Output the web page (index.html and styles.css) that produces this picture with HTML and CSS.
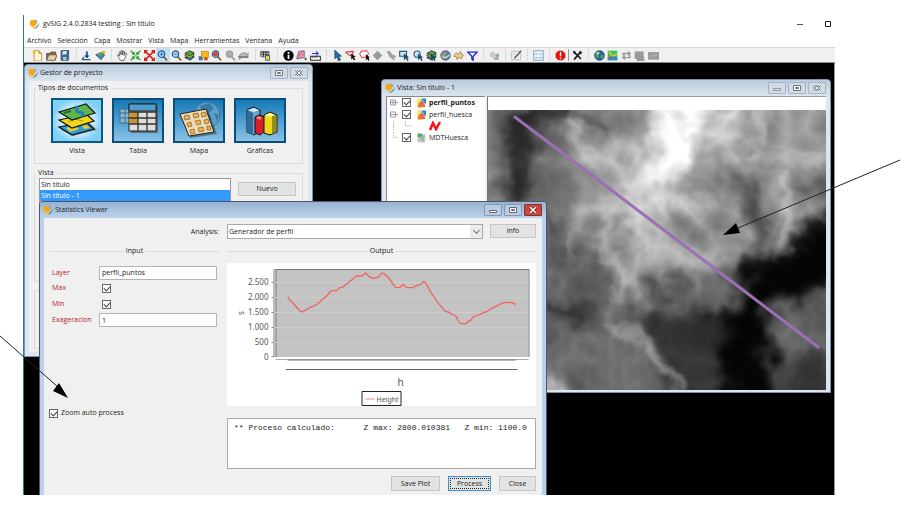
FILE: index.html
```html
<!DOCTYPE html>
<html lang="es">
<head>
<meta charset="utf-8">
<title>gvSIG 2.4.0.2834 testing : Sin título</title>
<link rel="stylesheet" href="styles.css">
</head>
<body>
<svg class="defs" width="0" height="0" aria-hidden="true">
  <symbol id="logo" viewBox="0 0 16 16">
    <circle cx="6" cy="6.500" r="5.500" fill="#f6a81c"/>
    <path d="M9 0.500c3 .5 4 3 3.500 6l-2-1c.5-2 0-3.500-1.500-5z" fill="#4aa7dc"/>
    <path d="M15.500 5c.5 5-2 9-8 10.500 1-1 2-2.500 3-3 3-1.500 4.500-4 5-7.500z" fill="#2479b5"/>
    <path d="M3 10c2 3 5 4 8 2l-3 3.500C5 15 3 13 3 10z" fill="#f8c440"/>
  </symbol>
  <symbol id="mag" viewBox="0 0 16 16">
    <path d="M9.500 9.500l5 5.500" stroke="#8a5a20" stroke-width="2.500"/>
    <circle cx="6.500" cy="6" r="4.600" fill="#b9dcf4" stroke="#215c92" stroke-width="1.800"/>
  </symbol>
  <symbol id="cursor" viewBox="0 0 16 16">
    <path d="M4 0v13l3-3 2.500 6 3-1.500L10 9h4z" fill="#236c9e" stroke="#123c60" stroke-width=".8"/>
  </symbol>
  <symbol id="globe" viewBox="0 0 16 16">
    <circle cx="8" cy="8" r="7" fill="#2465a5" stroke="#10314c"/>
    <path d="M3 4c3-3 6-2 6 0L6 7l1 4-3 1-2-4zM10 7l4 1-2 5-3-2z" fill="#5aa54c"/>
    <circle cx="5.500" cy="5" r="2" fill="#d9f0fa" opacity=".7"/>
  </symbol>
  <symbol id="layers" viewBox="0 0 16 16">
    <path d="M1 11l7-3 7 2-6 5z" fill="#2b8fc8" stroke="#111"/>
    <path d="M1 8l7-3 7 2-6 5z" fill="#f5d327" stroke="#111"/>
    <path d="M1 5l7-4 7 3-6 5z" fill="#4da34b" stroke="#111"/>
  </symbol>
  <symbol id="lyr" viewBox="0 0 16 16">
    <path d="M0 0h10v16H0z" fill="#fbe36a"/><path d="M8 0h8v9H8z" fill="#2b83d4"/>
    <path d="M2 16c0-7 3-11 6-11s6 5 7 10z" fill="#ee6b3b"/><path d="M8 1l5 7" stroke="#fff"/>
  </symbol>
</svg>

<main class="app">
  <header class="titlebar">
    <svg class="logo"><use href="#logo"/></svg>
    <h1>gvSIG 2.4.0.2834 testing : Sin título</h1>
    <button class="sys" aria-label="Minimizar"><svg viewBox="0 0 8 8"><path d="M1 4.500h6" stroke="#555"/></svg></button>
    <button class="sys" aria-label="Maximizar"><svg viewBox="0 0 8 8"><path d="M1.500 1.500h5v5h-5z" fill="none" stroke="#222"/></svg></button>
  </header>
  <nav class="menu">
    <a href="#">Archivo</a><a href="#">Selección</a><a href="#">Capa</a><a href="#">Mostrar</a><a href="#">Vista</a><a href="#">Mapa</a><a href="#">Herramientas</a><a href="#">Ventana</a><a href="#">Ayuda</a>
  </nav>
  <div class="toolbar"><div class="strip">
    <button aria-label="Nuevo"><svg viewBox="0 0 16 16"><path d="M3 1h7l4 4v11H3z" fill="#fff6cf" stroke="#a0762a"/><path d="M10 1v4h4" fill="#e9c46a" stroke="#a0762a"/><path d="M1 3h4M3 1v4" stroke="#f4a900" stroke-width="2"/></svg></button>
    <button aria-label="Abrir"><svg viewBox="0 0 16 16"><path d="M1 5h5l1-2h7v11H1z" fill="#8a6f46" stroke="#4a3b25"/><path d="M4 7h12l-3 8H1z" fill="#e6d3ab" stroke="#4a3b25"/></svg></button>
    <button aria-label="Guardar"><svg viewBox="0 0 16 16"><path d="M3 1l11-1v14l-2 2-9-1z" fill="#3c6a8e" stroke="#29475e"/><path d="M5 2l6-1v5l-6 1z" fill="#dbe6ee"/><path d="M6 10h5v5H6z" fill="#b7c5cf"/></svg></button>
    <i class="sep"></i>
    <button aria-label="Añadir vista"><svg viewBox="0 0 16 16"><path d="M7 2h3v8H7z" fill="#2563b0"/><path d="M5 8h7l-3 4z" fill="#172c84"/><path d="M1 14l4-4M2 14h12" stroke="#16708a" stroke-width="2"/></svg></button>
    <button aria-label="Añadir capa"><svg viewBox="0 0 16 16"><path d="M1 7l7-3 6 3-5 7z" fill="#3a89b5" stroke="#214657"/><path d="M2 6l6-3 4 2-5 4z" fill="#58a65c"/><path d="M10 3h5M12.500 1v5" stroke="#e7a300" stroke-width="2"/></svg></button>
    <i class="sep"></i>
    <button aria-label="Desplazar"><svg viewBox="0 0 16 16"><path d="M5 15C3 12 1 9 1 7l2 1 1 1-1-6 2 0 1 4V1h2v6l1-5h2l-1 6 2-4 2 1c-1 4-2 7-4 10z" fill="#fff" stroke="#333"/></svg></button>
    <button aria-label="Zoom todo"><svg viewBox="0 0 16 16"><path d="M1 1l5 5M15 1l-5 5M1 15l5-5M15 15l-5-5M3 6h3V3M10 3v3h3M3 10h3v3M10 13v-3h3" fill="none" stroke="#2d9b30" stroke-width="1.800"/><path d="M6 6h4v4H6z" fill="#8fd18e"/></svg></button>
    <button aria-label="Zoom previo"><svg viewBox="0 0 16 16"><path d="M2 2l12 12M14 2L2 14M1 5V1h4M11 1h4v4M1 11v4h4M11 15h4v-4" fill="none" stroke="#d8231d" stroke-width="2.200"/></svg></button>
    <button class="on" aria-label="Acercar"><svg viewBox="0 0 16 16"><use href="#mag"/><path d="M4 6h5M6.500 3.500v5" stroke="#153e6b"/></svg></button>
    <button aria-label="Alejar"><svg viewBox="0 0 16 16"><use href="#mag"/><path d="M4 6h5" stroke="#153e6b"/></svg></button>
    <button aria-label="Capas"><svg><use href="#layers"/></svg></button>
    <button aria-label="Zoom a capa"><svg viewBox="0 0 16 16"><path d="M1 9h6v6H1z" fill="#2f78bd"/><path d="M5 2h10v9H5z" fill="#f6b91e" stroke="#bd7b07"/><path d="M9 11h5v4H9z" fill="#c8442b"/></svg></button>
    <button aria-label="Zoom selección"><svg viewBox="0 0 16 16"><use href="#mag"/><circle cx="6.500" cy="6" r="3.400" fill="#de3b35"/></svg></button>
    <button aria-label="Zoom anterior"><svg viewBox="0 0 16 16"><path d="M9.500 9.500l5 5.500" stroke="#999" stroke-width="2.500"/><circle cx="6.500" cy="6" r="5" fill="#aaa" stroke="#909090"/></svg></button>
    <button aria-label="Localizar"><svg viewBox="0 0 16 16"><path d="M2 9c0-4 8-7 11-3l2-1-1 6H5l-3 3 1-4z" fill="#bbb" stroke="#777"/><path d="M0 10h15" stroke="#777" stroke-width="2"/></svg></button>
    <i class="sep"></i>
    <button aria-label="Tabla"><svg viewBox="0 0 16 16"><path d="M1 2h12v8H1z" fill="#fff" stroke="#333"/><path d="M1 4h12M1 7h12M5 2v8M9 2v8" stroke="#333" stroke-width="1.500"/><path d="M8 8h6v7H8z" fill="#e2d45a" stroke="#333"/></svg></button>
    <i class="sep"></i>
    <button aria-label="Información"><svg viewBox="0 0 16 16"><circle cx="8" cy="8" r="7.500" fill="#050505"/><path d="M8 3v2.500M8 7v6" stroke="#fff" stroke-width="2.500"/></svg></button>
    <button aria-label="Área"><svg viewBox="0 0 16 16"><path d="M4 2l8-1v10l-11 2z" fill="#f2b2bd" stroke="#3544b4"/><path d="M2 12L11 2M6 12l6-7M3 8l5-6" stroke="#d4202a"/><path d="M12 13h4M14 11v4" stroke="#222"/></svg></button>
    <button aria-label="Distancia"><svg viewBox="0 0 16 16"><path d="M1 9h14v6H1z" fill="#fff" stroke="#222" stroke-width="1.500"/><path d="M4 9v3M7 9v3M10 9v3" stroke="#222"/><path d="M3 5h9M9 2l3 3-3 3" stroke="#2636d8" fill="none" stroke-width="1.500"/></svg></button>
    <i class="sep"></i>
    <button aria-label="Seleccionar"><svg><use href="#cursor"/></svg></button>
    <button aria-label="Por polígono"><svg viewBox="0 0 16 16"><path d="M1 3l11-1-1 5-4 1M1 3l7 6" fill="none" stroke="#d82c34" stroke-width="1.600"/><path d="M9 5v9l2-2 2 3 2-1-2-4h3z" fill="#111"/></svg></button>
    <button aria-label="Por círculo"><svg viewBox="0 0 16 16"><path d="M3 2l8-1 3 4-3 5-7 1-3-5z" fill="#fff" stroke="#d82c34" stroke-width="1.400"/><path d="M10 6v9l2-2 2 3 1-1-1-4h2z" fill="#111"/></svg></button>
    <button aria-label="Por capa"><svg viewBox="0 0 16 16"><path d="M8 1l3 3 4 4-4 4-3 3-3-3-4-4 4-4z" fill="#999"/></svg></button>
    <button aria-label="Invertir"><svg viewBox="0 0 16 16"><path d="M1 2l4-1 4 5 6 3-3 3 1 4-8-6z" fill="#a2a2a2"/></svg></button>
    <button aria-label="Por rectángulo"><svg viewBox="0 0 16 16"><path d="M1 2h10v7H1z" fill="#cce2ef" stroke="#1d5c85" stroke-width="1.600"/><path d="M7 5v10l3-3 2 4 2-1-2-4h3z" fill="#184a69"/></svg></button>
    <button aria-label="Por radio"><svg viewBox="0 0 16 16"><circle cx="6" cy="6" r="4.500" fill="#d6e6ef" stroke="#1d5c85" stroke-width="1.600"/><path d="M7 5v10l3-3 2 4 2-1-2-4h3z" fill="#184a69"/></svg></button>
    <button aria-label="Por atributos"><svg viewBox="0 0 16 16"><use href="#layers"/><path d="M7 5v10l3-3 2 4 2-1-2-4h3z" fill="#184a69"/></svg></button>
    <button aria-label="Mundo"><svg viewBox="0 0 16 16"><circle cx="8" cy="8" r="7" fill="#4a80ad" stroke="#555"/><path d="M3 5c3-3 6-2 7 0L7 8l2 4-4 1-3-4z" fill="#9c9a68"/><path d="M3 10q6 3 11-3" stroke="#ccc" stroke-width="2" fill="none"/></svg></button>
    <button aria-label="Recargar"><svg viewBox="0 0 16 16"><path d="M1 9l4-5 2 3 4-5 1 4 3 1-3 6-3-3-3 4-1-4z" fill="#ecd08a" stroke="#8c6a2b"/></svg></button>
    <button aria-label="Filtro"><svg viewBox="0 0 16 16"><path d="M1 3h14L9 9v6l-2-2V9z" fill="#eef" stroke="#1b29d0" stroke-width="1.800"/></svg></button>
    <i class="sep"></i>
    <button aria-label="Enlace"><svg viewBox="0 0 16 16"><circle cx="5" cy="7" r="4" fill="#c9c9c9"/><circle cx="12" cy="8" r="3" fill="#8fb39a"/><path d="M7 11h7v3H7z" fill="#999"/></svg></button>
    <i class="sep"></i>
    <button aria-label="Editar"><svg viewBox="0 0 16 16"><path d="M1 2h13v12H1z" fill="#f6f6f2" stroke="#9fa9ad"/><path d="M1 6h13M5 2v12M10 2v12" stroke="#c8d2d6"/><path d="M5 12L15 1" stroke="#5b4a30" stroke-width="1.800"/></svg></button>
    <i class="sep"></i>
    <button aria-label="Cuadrícula"><svg viewBox="0 0 16 16"><path d="M1 1h14v14H1z" fill="#eaf3fb" stroke="#86a8c8" stroke-width="1.500"/><path d="M3 5h4v2H3zM9 5h4v2H9zM3 10h4v2H3zM9 10h4v2H9z" fill="#9fbcd8"/></svg></button>
    <i class="sep"></i>
    <button aria-label="Avisos"><svg viewBox="0 0 16 16"><path d="M5 1h6l4 4v6l-4 4H5l-4-4V5z" fill="#e8120c"/><path d="M8 3v6M8 11v2" stroke="#fff" stroke-width="2"/></svg></button>
    <i class="bar"></i>
    <button aria-label="Herramientas"><svg viewBox="0 0 16 16"><path d="M3 3l10 10M13 2L3 14" stroke="#222" stroke-width="2.400"/><path d="M1 2l3-1 2 3-3 2zM11 1l4 3-3 3z" fill="#222"/></svg></button>
    <i class="sep"></i>
    <button aria-label="Geoproceso"><svg><use href="#globe"/></svg></button>
    <button aria-label="Mapa"><svg viewBox="0 0 16 16"><path d="M1 1h14v14H1z" fill="#3fc05a"/><path d="M1 11l8-2 6 2v4H1z" fill="#2c8fd4"/><path d="M3 3l5 6 6-3" stroke="#f2d22e" stroke-width="2" fill="none"/><path d="M3 12l5-3" stroke="#e5482a" stroke-width="2"/></svg></button>
    <button aria-label="Intercambiar"><svg viewBox="0 0 16 16"><path d="M2 8V4h8V1l5 4-5 4V6H5v2zM14 8v4H6v3l-5-4 5-4v3h5V8z" fill="#999"/></svg></button>
    <button aria-label="Copiar"><svg viewBox="0 0 16 16"><path d="M1 2h13v11H1zM4 10h11v6H4z" fill="#9a9a9a"/></svg></button>
    <button aria-label="Imagen"><svg viewBox="0 0 16 16"><path d="M0 3h16v11H0z" fill="#9a9a9a"/><path d="M3 11l4-4 3 2 4-2" stroke="#ccc" fill="none"/></svg></button>
  </div></div>

  <div class="desktop">
    <section class="win project">
      <div class="wbar"><svg class="logo"><use href="#logo"/></svg><h2>Gestor de proyecto</h2>
        <button class="wb" aria-label="Maximizar"><svg viewBox="0 0 8 6"><path d="M.5 .5h7v5h-7zM2.500 2.500h3v1h-3z" fill="#f6f6f6" stroke="#777"/></svg></button>
        <button class="wb" aria-label="Cerrar"><svg viewBox="0 0 8 6"><path d="M1 0l6 6M7 0L1 6" stroke="#777" stroke-width="2.500"/><path d="M1 0l6 6M7 0L1 6" stroke="#fff"/></svg></button>
      </div>
      <div class="wbody pbody">
        <fieldset class="types"><legend>Tipos de documentos</legend>
          <div class="docset">
          <button class="doc"><svg viewBox="0 0 52 45"><defs><radialGradient id="glow"><stop offset=".4" stop-color="#fff"/><stop offset="1" stop-color="#7fd0f5"/></radialGradient><linearGradient id="blue" x2="0" y2="1"><stop offset="0" stop-color="#1377b6"/><stop offset="1" stop-color="#8cc4e8"/></linearGradient></defs>
            <path d="M1 1h50v43H1z" fill="url(#glow)" stroke="#0b5684" stroke-width="2"/>
            <path d="M10 32l29-7 7 7-24 6z" fill="#555" opacity=".6"/>
            <path d="M8 29l27-5 8 7-22 6z" fill="#2f9ada" stroke="#111" stroke-width="1.200"/><path d="M15 30l8-3 5 4-9 3zM31 28l5-1 3 3-6 1z" fill="#e2cf2a"/>
            <path d="M8 22l27-6 8 7-22 7z" fill="#f1d719" stroke="#111" stroke-width="1.200"/><path d="M17 24l7-3 8 2" stroke="#b49312" fill="none"/>
            <path d="M8 14l27-8 9 9-23 7z" fill="#5cb64c" stroke="#111" stroke-width="1.200"/><path d="M24 9c5 0-2 4 4 5s4 3 2 5" stroke="#287fb9" stroke-width="3" fill="none"/><path d="M13 15l7-2" stroke="#256b2b" stroke-width="2"/></svg><span>Vista</span></button>
          <button class="doc"><svg viewBox="0 0 52 45"><path d="M1 1h50v43H1z" fill="url(#blue)" stroke="#0b4e7a" stroke-width="2"/>
            <path d="M8 11h12v14H8z" fill="#87b9d8" stroke="#3c6d8c"/><path d="M8 15h12M8 20h12M13 11v14" stroke="#3c6d8c"/>
            <path d="M19 8h27v27H19z" fill="#444" opacity=".6"/><path d="M17 6h27v27H17z" fill="#ddd" stroke="#222"/><path d="M17 6h27v7H17z" fill="#4e9fd0" stroke="#222"/><path d="M17 14h9v12h-9z" fill="#c8923a"/>
            <path d="M17 14h27M17 20h27M17 26h27M26 14v19M35 14v19" stroke="#333" stroke-width="1.300"/></svg><span>Tabla</span></button>
          <button class="doc"><svg viewBox="0 0 52 45"><path d="M1 1h50v43H1z" fill="url(#blue)" stroke="#0b4e7a" stroke-width="2"/>
            <circle cx="34" cy="17" r="13" fill="#5a9fc9" stroke="#39779c"/><path d="M27 8l9-3 5 5-5 5 3 7-6-1zM41 15l5 2-2 6z" fill="#387ca4"/>
            <path d="M8 19l27-6 9 23-27 4z" fill="#234" opacity=".5"/><path d="M7 16l26-5 8 23-25 4z" fill="#eddcb0" stroke="#222"/>
            <path d="M11 18l5-1 1 4-5 1zM20 16l5-1 1 4-5 1zM28 15l4-1 2 4-5 1zM14 25l4-1 1 4-4 1zM22 23l5-1 1 4-4 1zM31 22l4-1 1 4-4 1zM17 32l4-1 1 4-4 1zM25 30l5-1 1 4-5 1zM34 28l3 0 1 4-4 0z" fill="#edae55" stroke="#8a6b3e" stroke-width=".8"/></svg><span>Mapa</span></button>
          <button class="doc"><svg viewBox="0 0 52 45"><path d="M1 1h50v43H1z" fill="url(#blue)" stroke="#0b4e7a" stroke-width="2"/>
            <path d="M13 12l6-3 7 3v21l-6 4-7-3z" fill="#68a8d2" stroke="#111"/><path d="M13 12l6 3v22l-6-3z" fill="#2d6e9d"/><path d="M14 12l6-2 5 2-5 2z" fill="#dceaf5"/>
            <path d="M21 19l4-2 6 2v14l-5 4-5-2z" fill="#d8202a" stroke="#111"/><path d="M22 20l3-2 3 2-2 2z" fill="#f08a88"/>
            <path d="M30 17l6-3 7 3v17l-7 3-6-2z" fill="#edd91c" stroke="#111"/><path d="M38 18l4-1v17l-4 2z" fill="#8f8d24"/><path d="M31 17l5-2 5 2-5 2z" fill="#fff6a0"/></svg><span>Gráficas</span></button>
          </div>
        </fieldset>
        <fieldset class="docs"><legend>Vista</legend>
          <div class="docrow">
            <ul class="list"><li>Sin título</li><li class="sel">Sin título - 1</li></ul>
            <button class="btn">Nuevo</button>
          </div>
        </fieldset>
        <fieldset class="props"></fieldset>
      </div>
    </section>

    <section class="win view">
      <div class="wbar"><svg class="logo"><use href="#logo"/></svg><h2>Vista: Sin título - 1</h2>
        <button class="wb" aria-label="Minimizar"><svg viewBox="0 0 8 6"><path d="M.5 3.500h7v2h-7z" fill="#ddd" stroke="#999"/></svg></button>
        <button class="wb" aria-label="Maximizar"><svg viewBox="0 0 8 6"><path d="M.5 .5h7v5h-7zM2.500 2.500h3v1h-3z" fill="#f6f6f6" stroke="#777"/></svg></button>
        <button class="wb" aria-label="Cerrar"><svg viewBox="0 0 8 6"><path d="M1 0l6 6M7 0L1 6" stroke="#777" stroke-width="2.500"/><path d="M1 0l6 6M7 0L1 6" stroke="#fff"/></svg></button>
      </div>
      <div class="wbody vbody">
        <div class="toc">
          <div class="trow"><svg class="exp" viewBox="0 0 10 10"><path d="M2.500 2.500h5v5h-5z" fill="#fff" stroke="#99a"/><path d="M3 5h4M5 3v4M8 5h2" stroke="#99a"/></svg><input type="checkbox" id="l1" checked><svg class="ly"><use href="#lyr"/></svg><label for="l1"><b>perfil_puntos</b></label></div>
          <div class="trow"><svg class="exp" viewBox="0 0 10 10"><path d="M2.500 2.500h5v5h-5z" fill="#fff" stroke="#99a"/><path d="M3 5h4M8 5h2" stroke="#99a"/></svg><input type="checkbox" id="l2" checked><svg class="ly"><use href="#lyr"/></svg><label for="l2">perfil_huesca</label></div>
          <div class="trow sym"><svg viewBox="0 0 54 10"><path d="M5.500 0v10M17.500 0v5h6" fill="none" stroke="#aaa" stroke-dasharray="1 1"/><path d="M42 9l3-7 3 6 4-7" fill="none" stroke="#f01414" stroke-width="2.500"/></svg></div>
          <div class="trow"><svg class="exp" viewBox="0 0 10 10"><path d="M5.500 0v5h5" fill="none" stroke="#aaa" stroke-dasharray="1 1"/></svg><input type="checkbox" id="l3" checked><svg class="ly" viewBox="0 0 16 16"><path d="M1 1h14v15H1z" fill="#ccc"/><path d="M3 6l4 3 7-3M2 12l5-1 6 3M10 2l1 12" stroke="#888" fill="none"/><path d="M1 0h8v6H1z" fill="#46b05b"/></svg><label for="l3">MDTHuesca</label></div>
        </div>
        <div class="mapbox">
          <svg class="map" viewBox="0 0 339 280" preserveAspectRatio="none">
            <defs>
              <filter id="relief" x="-10%" y="-10%" width="120%" height="120%" color-interpolation-filters="sRGB">
                <feGaussianBlur in="SourceGraphic" stdDeviation="8" result="b"/>
                <feTurbulence type="fractalNoise" baseFrequency=".03" numOctaves="3" seed="8" result="n"/>
                <feDisplacementMap in="b" in2="n" scale="38" xChannelSelector="R" yChannelSelector="G" result="d"/>
                <feTurbulence type="turbulence" baseFrequency=".02" numOctaves="3" seed="5"/>
                <feColorMatrix values="-1.200 0 0 0 .7  -1.200 0 0 0 .7  -1.200 0 0 0 .7  0 0 0 0 1" result="t"/>
                <feComposite in="d" in2="t" operator="arithmetic" k1=".42" k2=".8"/>
              </filter>
              <filter id="ridge" x="-10%" y="-10%" width="120%" height="120%">
                <feGaussianBlur stdDeviation="4" result="b"/>
                <feTurbulence type="fractalNoise" baseFrequency=".05" numOctaves="3" seed="3" result="n"/>
                <feDisplacementMap in="b" in2="n" scale="22" xChannelSelector="R" yChannelSelector="G"/>
              </filter>
              <clipPath id="mapclip"><path d="M0 0h339v280H0z"/></clipPath>
            </defs>
            <g clip-path="url(#mapclip)"><g filter="url(#relief)">
              <path d="M-40-40h420v360H-40z" fill="#7c7c7c"/>
              <path d="M75-20h280v120l-55 20-40 50-30 15-50 0-60 0-40-50z" fill="#a0a0a0"/>
              <path d="M95 40l60-15 30 40 45 15-5 60-45 10-50-10z" fill="#b8b8b8"/>
              <path d="M165-30h65l-20 50-15 45-40 15-10-5 20-35z" fill="#fff"/>
              <path d="M140 85l25-10 30 25-15 30-30-5z" fill="#d4d4d4"/>
              <path d="M220-20h45l-10 60-40 5z" fill="#d0d0d0"/>
              <path d="M90-20h70l-20 45-45-10z" fill="#808080"/>
              <path d="M65-20h15l-6 30-30 20-5 65-22-5 2-65 20-30z" fill="#2c2c2c"/>
              <path d="M190 105l40-3 20 20-30 12-35-8z" fill="#8c8c8c"/>
              <path d="M235 50l30 15 20 60-12 30-18-55z" fill="#505050"/>
              <path d="M310 65l50 0v25l-45 0z" fill="#606060"/>
              <path d="M160 165l90-20 10 20-30 60-50-10z" fill="#6c6c6c"/>
              <path d="M375 92v98l-82 0-5 25 15 95h-66l-2-75-8-22 22-30 17-35 40-15 30-28z" fill="#050505"/>
              <path d="M285 85l22-15-2 45-10 32-10-16z" fill="#a8a8a8"/>
              <path d="M275 200l75-22v140h-50z" fill="#6a6a6a"/>
              <path d="M300 250l50-10v60h-50z" fill="#3c3c3c"/>
              <path d="M60 130l60 10 15 50-70-5z" fill="#686868"/>
              <path d="M130 200l100 0 10 110-40 0-45-85z" fill="#383838"/>
              <path d="M50 190l55 2 20 10-30 8-45 0z" fill="#2b2b2b"/>
              <path d="M50 212l90-4 60 92H50z" fill="#6c6c6c"/>
              <path d="M50 270l20-2 5 30H50z" fill="#ccc"/>
            </g>
            <g filter="url(#ridge)" fill="none" stroke="#ddd" stroke-width="7">
              <path d="M80 8l22 36 35 18 12 20M176-5l-8 60-18 22-4 35 20 28" opacity=".7"/>
              <path d="M146 78l-25 25-6 35 18 22-4 35M260 52l16-28-4-25M260 52l28-8 50 6M300 60l-3 80M168 85l30 8 30 0" opacity=".55"/>
              <path d="M145 118l20 30 24 30M170 140l28 15 18 28M200 135l30 20M100 70l-10 40-8 40" opacity=".35"/>
              <path d="M118 212l42 22 35 50" opacity=".55"/>
              <path d="M-5 65l12 5M8 130l20-10" opacity=".4"/>
              <path d="M30 50l4 50M90 2l30 20M150 165l30 25M55 100l12 25" stroke="#222" opacity=".5"/>
            </g></g>
            <path d="M27 7l304 230" stroke="#9b70b5" stroke-width="3" stroke-linecap="round"/>
          </svg>
        </div>
      </div>
    </section>

    <section class="win stats">
      <div class="wbar"><svg class="logo"><use href="#logo"/></svg><h2>Statistics Viewer</h2>
        <button class="wb" aria-label="Minimizar"><svg viewBox="0 0 8 6"><path d="M.5 3.500h7v2h-7z" fill="#fff" stroke="#667"/></svg></button>
        <button class="wb" aria-label="Maximizar"><svg viewBox="0 0 8 6"><path d="M.5 .5h7v5h-7zM2.500 2.500h3v1h-3z" fill="#fff" stroke="#667"/></svg></button>
        <button class="wb close" aria-label="Cerrar"><svg viewBox="0 0 8 6"><path d="M1 0l6 6M7 0L1 6" stroke="#722" stroke-width="3"/><path d="M1 0l6 6M7 0L1 6" stroke="#fff" stroke-width="1.500"/></svg></button>
      </div>
      <form class="wbody sbody">
        <label class="alabel" for="analysis">Analysis:</label>
        <div class="arow"><select id="analysis"><option>Generador de perfil</option></select><button type="button" class="btn info">info</button></div>
        <h3 class="rule">Input</h3>
        <h3 class="rule">Output</h3>
        <div class="inputs">
          <div class="frow"><label for="layer">Layer</label><input type="text" id="layer" value="perfil_puntos"></div>
          <div class="frow"><label for="max">Max</label><input type="checkbox" id="max" checked></div>
          <div class="frow"><label for="min">Min</label><input type="checkbox" id="min" checked></div>
          <div class="frow"><label for="exa">Exageracion</label><input type="text" id="exa" value="1"></div>
          <div class="zoomrow"><input type="checkbox" id="auto" checked><label for="auto">Zoom auto process</label></div>
        </div>
        <div class="outputs">
          <svg class="chart" viewBox="0 0 308 143">
            <path d="M48 6h253v88H48z" fill="#c3c3c3"/>
            <path d="M48 6.500h253.500V94M46.500 6v88" fill="none" stroke="#777"/>
            <path d="M48.500 6v88" stroke="#777"/>
            <path d="M48 19.500h253M48 34.500h253M48 49.500h253M48 64.500h253M48 79.500h253" stroke="#d2d2d2" stroke-dasharray="2 1"/>
            <path d="M44 19.500h2M44 34.500h2M44 49.500h2M44 64.500h2M44 79.500h2M44 93.500h2" stroke="#888"/>
            <path d="M48 96.500h253" stroke="#aaa"/><path d="M60 97h228" stroke="#777"/><path d="M58 106.500h232" stroke="#666"/>
            <g class="ticks"><text x="41" y="22">2.500</text><text x="41" y="37">2.000</text><text x="41" y="52">1.500</text><text x="41" y="67">1.000</text><text x="41" y="82">500</text><text x="41" y="97">0</text></g>
            <text class="axis" transform="translate(16 52) rotate(-90)">s</text>
            <text class="xname" x="173" y="123">h</text>
            <polyline transform="scale(.3333) translate(-21 -207)" fill="none" stroke="#f0655f" stroke-width="4" points="202,308 208,318 215,325 238,350 245,354 252,350 262,345 270,339 281,336 294,328 308,314 317,308 330,292 338,290 348,290 358,281 366,280 375,272 382,268 390,260 400,253 407,246 425,246 436,237 446,248 457,253 470,251 476,247 482,238 490,238 496,245 502,248 515,267 526,281 538,280 548,271 558,281 578,281 588,275 600,272 609,263 615,266 634,300 644,313 652,326 662,337 674,352 684,354 694,361 703,364 709,370 712,379 720,389 737,389 743,383 750,380 758,369 768,364 780,361 790,355 800,353 808,346 820,340 848,326 875,325 885,332"/>
            <path d="M134.500 128.500h39v14h-39z" fill="#fff" stroke="#222"/><path d="M138 136h9" stroke="#f28b86"/>
            <text class="legend" x="149" y="139">Height</text>
          </svg>
          <textarea aria-label="Resultado" readonly wrap="off">** Proceso calculado:      Z max: 2800.010381   Z min: 1100.0</textarea>
          <div class="actions"><button type="button" class="btn">Save Plot</button><button type="button" class="btn def">Process</button><button type="button" class="btn">Close</button></div>
        </div>
      </form>
    </section>
  </div>
</main>
<svg class="arrows" viewBox="0 0 900 511" aria-hidden="true">
  <path d="M900 160L738 228M0 336l58 51" stroke="#222"/>
  <path d="M723 235l13-12 4 10zM68 398L53 391l6-8z" fill="#000"/>
</svg>
</body>
</html>
```

FILE: styles.css
```css
* { box-sizing: border-box; }
body {
  margin: 0;
  padding: 15px 65px 16px 23px;
  min-height: 100vh;
  display: flex;
  position: relative;
  background: #fff;
  color: #222;
  font: 7px/10px "Open Sans", "Noto Sans", sans-serif;
  overflow: hidden;
}
h1, h2, h3 { margin: 0; font-size: inherit; font-weight: 400; }
button, input, select, textarea { font: inherit; color: inherit; margin: 0; padding: 0; border-radius: 0; }
svg { display: block; }
.defs { position: absolute; }

.app { flex: 1; min-width: 0; display: flex; flex-direction: column; border-left: 1px solid #2f8076; }
.titlebar { display: flex; align-items: center; height: 18px; padding: 0 3px 0 5px; }
.logo { width: 11px; height: 10px; flex: none; }
.titlebar h1 { flex: 1; margin-left: 3px; }
.sys { width: 8px; height: 8px; border: 0; background: none; margin-left: 20px; }
.menu { display: flex; gap: 6px; align-items: center; height: 14px; padding: 2px 0 0 3px; }
.menu a { color: #222; text-decoration: none; }

.toolbar { background: #f0f0f0; border-top: 1px solid #d8d8d8; border-bottom: 1px solid #888; height: 16px; }
.strip { display: flex; width: 629px; height: 14px; margin-left: 7px; }
.strip button { flex: 27 1 0; min-width: 0; border: 0; background: none; display: flex; align-items: center; justify-content: center; }
.strip button.on { background: #bfe0f7; }
.strip svg { width: 11px; height: 11px; }
.sep { flex: 17 1 0; background: repeating-linear-gradient(#c4c4c4 0 1px, transparent 1px 2px) 4px 1px / 1px 12px no-repeat; }
.bar { flex: 7 1 0; background: linear-gradient(#999, #999) 1px 1px / 1px 12px no-repeat; }

.desktop { flex: 1; position: relative; background: #000; border-right: 1px solid #999; overflow: hidden; }
.win { position: absolute; display: flex; flex-direction: column; background: #dbe7f3; border: 1px solid #8394a5; border-radius: 4px 4px 0 0; padding: 0 4px 4px; }
.wbar { display: flex; align-items: center; height: 16px; flex: none; margin: 0 -4px; padding: 0 4px 0 3px; gap: 2px; background: linear-gradient(#bccbdb, #dae5f0); border-radius: 3px 3px 0 0; }
.wbar .logo { width: 10px; }
.wbar h2 { flex: 1; }
.wb { width: 18px; height: 12px; border: 1px solid #a4b4c6; border-radius: 1px; background: #cfdbe8; display: flex; align-items: center; justify-content: center; }
.wb svg { width: 8px; height: 6px; }
.wbody { flex: 1; background: #f0f0f0; min-height: 0; }

.project { left: 0; top: 1px; width: 289px; height: 293px; }
.pbody { padding: 3px 5px; display: flex; flex-direction: column; }
fieldset { margin: 0; border: 1px solid #dcdcdc; padding: 0 4px; min-width: 0; }
legend { padding: 0 3px; margin-left: -4px; height: 8px; line-height: 8px; }
.types { height: 80px; }
.docset { display: flex; justify-content: center; gap: 9px; padding-top: 6px; }
.doc { width: 52px; padding: 0; border: 0; background: none; text-align: center; line-height: 16px; }
.doc svg { width: 52px; height: 45px; }
.doc span { display: block; }
.docs { height: 113px; margin-top: 5px; }
.docrow { display: flex; gap: 7px; }
.list { flex: 1; margin: 1px 0 0; padding: 0; list-style: none; height: 60px; border: 1px solid #999; background: #fff; }
.list li { height: 11px; line-height: 11px; padding-left: 1px; }
.sel { background: #3399fd; color: #fff; }
.btn { border: 1px solid #c6c6c6; background: #e2e4e4; height: 14px; line-height: 12px; text-align: center; }
.docrow .btn { width: 58px; margin: 5px 2px 0 0; }
.props { flex: 1; margin-top: 8px; }

.view { left: 357px; top: 16px; width: 450px; height: 314px; padding-bottom: 2px; }
.vbody { display: flex; gap: 2px; }
.toc { width: 99px; background: #fff; border: 1px solid #888; border-width: 1px 0 0 1px; }
.trow { display: flex; align-items: center; height: 11px; padding-left: 1px; }
.trow + .trow { margin-top: 1px; }
.trow.sym { height: 10px; }
.trow.sym svg { width: 54px; height: 10px; }
.exp { width: 10px; height: 11px; }
.ly { width: 9px; height: 10px; margin: 0 3px 0 6px; }
.trow b { font-family: "Noto Sans", sans-serif; }
.trow input { margin-left: 4px; }
.mapbox { flex: 1; background: #fff; border-left: 1px solid #777; border-top: 1px solid #999; padding-top: 13px; display: flex; min-width: 0; }
.map { width: 100%; height: 100%; }

input[type="checkbox"] { appearance: none; flex: none; width: 9px; height: 9px; border: 1px solid #666; background: #fff; position: relative; }
input[type="checkbox"]:checked::after { content: ""; position: absolute; left: 1px; top: 1px; width: 5px; height: 3px; border: solid #444; border-width: 0 0 1px 1px; transform: rotate(-45deg); }

.stats { left: 15px; top: 138px; width: 508px; bottom: 0; background: #b9d1ea; padding-bottom: 0; border-bottom: 0; border-color: #556; }
.stats .wbar { background: linear-gradient(#97b2cf, #bcd3ec); }
.stats .wb { background: #b8cce2; border-color: #8199b5; }
.stats .wb.close { background: #c8483f; border-color: #8a302c; }
.sbody { display: grid; grid-template-columns: 171px 1fr; grid-template-rows: 15px 10px 1fr; column-gap: 7px; row-gap: 7px; padding: 6px 6px 0 5px; }
.alabel { text-align: right; line-height: 15px; padding-right: 1px; }
.arow { display: flex; gap: 7px; position: relative; }
.arow select { flex: 1; height: 15px; border: 1px solid #aaa; appearance: none; padding-left: 1px; background: linear-gradient(#fff, #fff) left / calc(100% - 12px) 100% no-repeat #ebebeb; }
.arow::after { content: ""; position: absolute; right: 57px; top: 4px; width: 4px; height: 4px; border: solid #777; border-width: 0 1px 1px 0; transform: rotate(45deg); }
.info { width: 46px; }
.rule { display: flex; align-items: center; gap: 2px; }
.rule::before, .rule::after { content: ""; flex: 1; border-top: 1px solid #dcdcdc; }
.inputs { padding: 2px 0 0; }
.frow { display: grid; grid-template-columns: 47px 1fr; align-items: center; height: 16px; padding: 0 3px; color: #b8182c; }
.frow:first-child { height: 15px; }
.frow input { color: #222; }
.frow input[type="checkbox"] { margin-left: 3px; }
.frow input[type="text"] { width: 100%; height: 14px; border: 1px solid #b4b4b4; background: #fff; padding: 0 2px; }
.zoomrow { display: flex; align-items: center; gap: 3px; margin-top: 80px; }
.outputs { display: flex; flex-direction: column; }
.chart { width: 100%; height: 143px; background: #fff; font-family: "Noto Sans", sans-serif; fill: #555; }
.ticks { font-size: 8px; text-anchor: end; }
.axis { font-size: 8px; }
.legend { font-size: 7px; }
.xname { font-size: 10px; text-anchor: middle; }
textarea { display: block; width: 100%; height: 51px; margin-top: 12px; resize: none; overflow: hidden; border: 1px solid #aaa; background: #fff; padding: 4px 6px; font: 8px/10px "Liberation Mono", monospace; }
.actions { display: flex; justify-content: flex-end; gap: 8px; margin-top: 7px; }
.actions .btn { width: 37px; height: 15px; }
.actions .btn:first-child { width: 49px; }
.actions .def { width: 43px; border: 1px solid #3c8ecb; outline: 1px dotted #222; outline-offset: -3px; }

.arrows { position: absolute; left: 0; top: 0; width: 900px; height: 511px; pointer-events: none; }
```
